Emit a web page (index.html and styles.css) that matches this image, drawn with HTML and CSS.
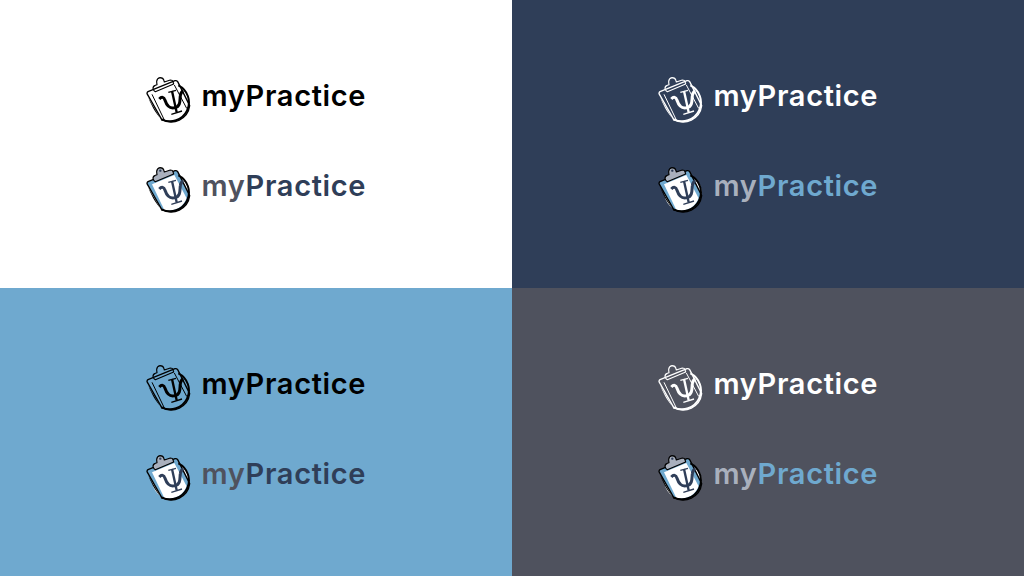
FILE: index.html
```html
<!DOCTYPE html>
<html lang="en">
<head>
<meta charset="utf-8">
<title>myPractice logo variants</title>
<link rel="stylesheet" href="styles.css">
</head>
<body>
<svg class="defs" width="0" height="0" aria-hidden="true">
  <symbol id="mark" viewBox="15 15 135 141">
    <circle class="m-disc" cx="90" cy="95" r="56"/>
    <path class="m-board" d="M21 62 L102 29 Q107 28 110 32 L146 104 A56 56 0 0 1 62 145 L18 68 Q18 64 21 62Z"/>
    <path class="m-crescent" d="M22 80 L62 149 L68 151 C48 134 34 110 22 80Z"/>
    <path class="m-paper" d="M33 70 L100 42 L137 112 A56 56 0 0 1 70 147Z"/>
    <path class="m-line" d="M33 70 L70 147 M100 42 L137 112"/>
    <path class="m-clip" d="M36 52 Q36 45 43 43 L48 41 Q47 36 47 31 Q48 22 57 20 Q67 20 69 29 L70 33 L88 27 Q95 27 96 32 L98 39 L43 62 Q38 60 36 52Z"/>
    <circle class="m-hole" cx="58" cy="29" r="3.5"/>
    <path class="m-ring" d="M112 43 A56 56 0 1 1 62 145"/>
    <path class="m-stem" d="M93 60 L107 124"/>
    <path class="m-serif" d="M82 64 L105 58 M91 130 L123 120"/>
    <path class="m-bowl" d="M55 84 C62 76 69 78 72 88 C78 106 86 114 102 110 C120 106 116 86 118 74 C119 66 122 62 127 60"/>
  </symbol>
</svg>
<main class="board">
  <section class="panel panel-white">
    <div class="logo mono-black"><svg class="mark"><use href="#mark"/></svg><span class="word"><span class="my">my</span><span class="practice">Practice</span></span></div>
    <div class="logo full-dark"><svg class="mark"><use href="#mark"/></svg><span class="word"><span class="my">my</span><span class="practice">Practice</span></span></div>
  </section>
  <section class="panel panel-navy">
    <div class="logo mono-white"><svg class="mark"><use href="#mark"/></svg><span class="word"><span class="my">my</span><span class="practice">Practice</span></span></div>
    <div class="logo full-light"><svg class="mark"><use href="#mark"/></svg><span class="word"><span class="my">my</span><span class="practice">Practice</span></span></div>
  </section>
  <section class="panel panel-blue">
    <div class="logo mono-black"><svg class="mark"><use href="#mark"/></svg><span class="word"><span class="my">my</span><span class="practice">Practice</span></span></div>
    <div class="logo full-dark"><svg class="mark"><use href="#mark"/></svg><span class="word"><span class="my">my</span><span class="practice">Practice</span></span></div>
  </section>
  <section class="panel panel-gray">
    <div class="logo mono-white"><svg class="mark"><use href="#mark"/></svg><span class="word"><span class="my">my</span><span class="practice">Practice</span></span></div>
    <div class="logo full-light"><svg class="mark"><use href="#mark"/></svg><span class="word"><span class="my">my</span><span class="practice">Practice</span></span></div>
  </section>
</main>
</body>
</html>
```
FILE: styles.css
```css
* { box-sizing: border-box; }
html, body { margin: 0; height: 100%; }
.defs { display: block; height: 0; width: 0; overflow: hidden; }
.board {
  display: grid;
  grid-template-columns: 512px 512px;
  grid-template-rows: 288px 288px;
  width: 1024px;
  height: 576px;
}
.panel {
  display: flex;
  flex-direction: column;
  align-items: center;
  justify-content: center;
  gap: 43px;
}
.panel-white { background: #fff; }
.panel-navy { background: #2f3e58; }
.panel-blue { background: #6fa9cf; }
.panel-gray { background: #4f525e; }

.logo { display: flex; align-items: flex-start; gap: 11px; height: 47px; width: 221px; }
.mark { width: 45px; height: 47px; flex: none; }
.word {
  font-family: Inter, "Liberation Sans", sans-serif;
  font-weight: 600;
  font-size: 29px;
  letter-spacing: 0.65px;
  line-height: 40px;
  white-space: nowrap;
}

/* Single-colour marks: strokes only */
.mono-black { --ink: #000; color: #000; }
.mono-white { --ink: #fff; color: #fff; }
.mono-black, .mono-white {
  --disc: none; --crescent: var(--ink); --board: none; --paper: none; --clip: none; --hole: none;
  --line: var(--ink); --psi: var(--ink); --ring: var(--ink); --outline: var(--ink);
}

/* Full-colour marks */
.full-dark, .full-light {
  --disc: #fff; --crescent: #000; --board: #6fa9cf; --paper: #fff; --clip: #a9b0bd; --hole: #2f3e58;
  --line: none; --psi: #2f3e58; --ring: #000; --outline: #000;
}
.full-dark .my { color: #4f525e; }
.full-dark .practice { color: #2f3e58; }
.full-light .my { color: #a9b0bd; }
.full-light .practice { color: #6fa9cf; }

.m-disc { fill: var(--disc); stroke: none; }
.m-crescent { fill: var(--crescent); stroke: none; }
.m-board { fill: var(--board); stroke: var(--outline); stroke-width: 4; stroke-linejoin: round; }
.m-paper { fill: var(--paper); stroke: none; }
.m-line { fill: none; stroke: var(--line); stroke-width: 3; }
.m-clip { fill: var(--clip); stroke: var(--outline); stroke-width: 3.5; stroke-linejoin: round; }
.m-hole { fill: var(--hole); stroke: none; }
.m-ring { fill: none; stroke: var(--ring); stroke-width: 6; }
.m-stem { fill: none; stroke: var(--psi); stroke-width: 7; }
.m-serif { fill: none; stroke: var(--psi); stroke-width: 4; }
.m-bowl { fill: none; stroke: var(--psi); stroke-width: 9; }
```
